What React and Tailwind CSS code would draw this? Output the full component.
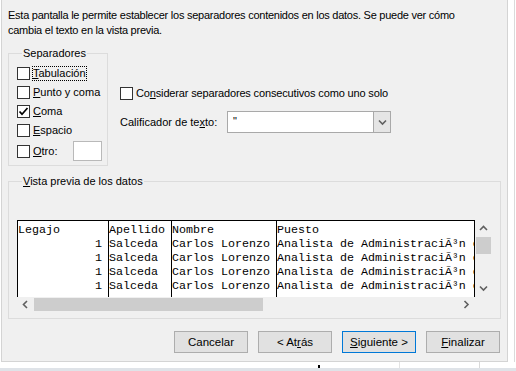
import React from "react";

const ui = { fontFamily: '"Liberation Sans", Arial, sans-serif' };
const mono = { fontFamily: '"Liberation Mono", "Courier New", monospace' };

function Box({ checked }) {
  return (
    <span className="w-[13px] h-[13px] shrink-0 border border-[#333333] bg-white flex items-center justify-center">
      {checked && (
        <svg width="11" height="11" viewBox="0 0 11 11">
          <path d="M1.5 5.5 L4 8.2 L9.5 2" fill="none" stroke="#000" strokeWidth="1.7" />
        </svg>
      )}
    </span>
  );
}

function Chevron({ dir }) {
  const paths = {
    up: "M1 6 L4.5 2.5 L8 6",
    down: "M1 2.5 L4.5 6 L8 2.5",
    left: "M6 1 L2.5 4.5 L6 8",
    right: "M2.5 1 L6 4.5 L2.5 8",
  };
  return (
    <svg width="9" height="9" viewBox="0 0 9 9">
      <path d={paths[dir]} fill="none" stroke="#606060" strokeWidth="1.6" />
    </svg>
  );
}

const rows = [
  ["Legajo", "Apellido", "Nombre", "Puesto"],
  ["           1", "Salceda", "Carlos Lorenzo", "Analista de AdministraciÃ³n e Informes"],
  ["           1", "Salceda", "Carlos Lorenzo", "Analista de AdministraciÃ³n e Informes"],
  ["           1", "Salceda", "Carlos Lorenzo", "Analista de AdministraciÃ³n e Informes"],
  ["           1", "Salceda", "Carlos Lorenzo", "Analista de AdministraciÃ³n e Informes"],
];

const cols = [
  { w: "w-[91px] border-l", i: 0 },
  { w: "w-[63px] border-l", i: 1 },
  { w: "w-[105px] border-l", i: 2 },
  { w: "flex-1 border-l border-r", i: 3 },
];

export default function App() {
  return (
    <div className="w-[516px] h-[371px] bg-white overflow-hidden text-black text-[11px]" style={ui}>
      <div className="flex">
        {/* dialog */}
        <div className="ml-px w-[507px] h-[362px] shrink-0 bg-[#f0f0f0] border-l border-r border-b border-[#d4d4d4] flex flex-col">
          <p className="pl-[6px] pt-[8px] leading-[15px] w-[480px] tracking-[-0.25px]">
            Esta pantalla le permite establecer los separadores contenidos en los datos. Se puede ver cómo cambia el texto en la vista previa.
          </p>

          <div className="flex mt-[8px] ml-[6px]">
            <fieldset className="w-[100px] h-[120px] border border-[#dcdcdc] pl-[8px]">
              <legend className="ml-[5px] px-px leading-[15px]">Separadores</legend>
              <div className="flex flex-col mt-[3px]">
                <div className="h-[19px] flex items-center">
                  <Box />
                  <span className="ml-[2px] leading-[13px] border border-dotted border-black">
                    <u>T</u>abulación
                  </span>
                </div>
                <div className="h-[19px] flex items-center">
                  <Box />
                  <span className="ml-[3px]"><u>P</u>unto y coma</span>
                </div>
                <div className="h-[19px] flex items-center">
                  <Box checked />
                  <span className="ml-[3px]"><u>C</u>oma</span>
                </div>
                <div className="h-[19px] flex items-center">
                  <Box />
                  <span className="ml-[3px]"><u>E</u>spacio</span>
                </div>
                <div className="h-[22px] flex items-center">
                  <Box />
                  <span className="ml-[3px] w-[40px]"><u>O</u>tro:</span>
                  <span className="w-[29px] h-[20px] bg-white border border-[#b9b9b9]" />
                </div>
              </div>
            </fieldset>

            <div className="ml-[12px] pt-[38px] flex flex-col">
              <div className="h-[19px] flex items-center">
                <Box />
                <span className="ml-[3px] tracking-[-0.15px]">Co<u>n</u>siderar separadores consecutivos como uno solo</span>
              </div>
              <div className="mt-[8px] flex items-center">
                <span className="w-[107px]">Calificador de te<u>x</u>to:</span>
                <div className="w-[164px] h-[22px] bg-white border border-[#a9a9a9] flex">
                  <span className="flex-1 pl-[5px] leading-[18px]">"</span>
                  <span className="w-[17px] bg-[#e5e5e5] border-l border-[#a9a9a9] flex items-center justify-center">
                    <Chevron dir="down" />
                  </span>
                </div>
              </div>
            </div>
          </div>

          <fieldset className="mt-[8px] ml-[6px] w-[493px] h-[145px] border border-[#dcdcdc] pl-[8px]">
            <legend className="ml-[5px] px-px leading-[15px]"><u>V</u>ista previa de los datos</legend>
            <div className="mt-[31px] w-[475px] flex flex-col">
              <div className="flex h-[77px]">
                <div className="w-[458px] h-[77px] bg-white border-t border-black flex overflow-hidden">
                  {cols.map((c) => (
                    <div
                      key={c.i}
                      className={`${c.w} border-black h-full pt-[2px] overflow-hidden whitespace-pre text-[11.67px] leading-[14px]`}
                      style={mono}
                    >
                      {rows.map((r, k) => (
                        <div key={k}>{r[c.i]}</div>
                      ))}
                    </div>
                  ))}
                </div>
                <div className="w-[17px] flex flex-col">
                  <div className="h-[17px] flex items-center justify-center"><Chevron dir="up" /></div>
                  <div className="h-[17px] bg-[#cdcdcd] mx-px" />
                  <div className="flex-1" />
                  <div className="h-[17px] flex items-center justify-center"><Chevron dir="down" /></div>
                </div>
              </div>
              <div className="flex h-[15px]">
                <div className="w-[458px] flex">
                  <div className="w-[17px] flex items-center justify-center"><Chevron dir="left" /></div>
                  <div className="w-[229px] bg-[#cdcdcd] my-px" />
                  <div className="flex-1" />
                  <div className="w-[17px] flex items-center justify-center"><Chevron dir="right" /></div>
                </div>
              </div>
            </div>
          </fieldset>

          <div className="mt-[12px] pr-[7px] flex justify-end gap-[10px]">
            {[
              [<>Cancelar</>, false],
              [<>&lt; At<u>r</u>ás</>, false],
              [<><u>S</u>iguiente &gt;</>, true],
              [<><u>F</u>inalizar</>, false],
            ].map(([t, def], i) => (
              <button
                key={i}
                className={`w-[74px] h-[22px] bg-[#e1e1e1] border ${def ? "border-[#0078d7]" : "border-[#adadad]"} text-[11.5px] leading-[20px]`}
              >
                {t}
              </button>
            ))}
          </div>
        </div>
        {/* right strip of window behind */}
        <div className="ml-[6px] w-px h-[362px] bg-[#dadada]" />
      </div>
      {/* bottom strip of window behind */}
      <div className="h-[9px] flex flex-col">
        <div className="h-[6px] flex">
          <div className="ml-[318px] w-[2px] mt-[3px] bg-black" />
          <div className="ml-[79px] w-px bg-[#e3e3e3]" />
          <div className="ml-[79px] w-px bg-[#d9d9d9]" />
        </div>
        <div className="h-[3px] bg-[#dfe3e8]" />
      </div>
    </div>
  );
}
